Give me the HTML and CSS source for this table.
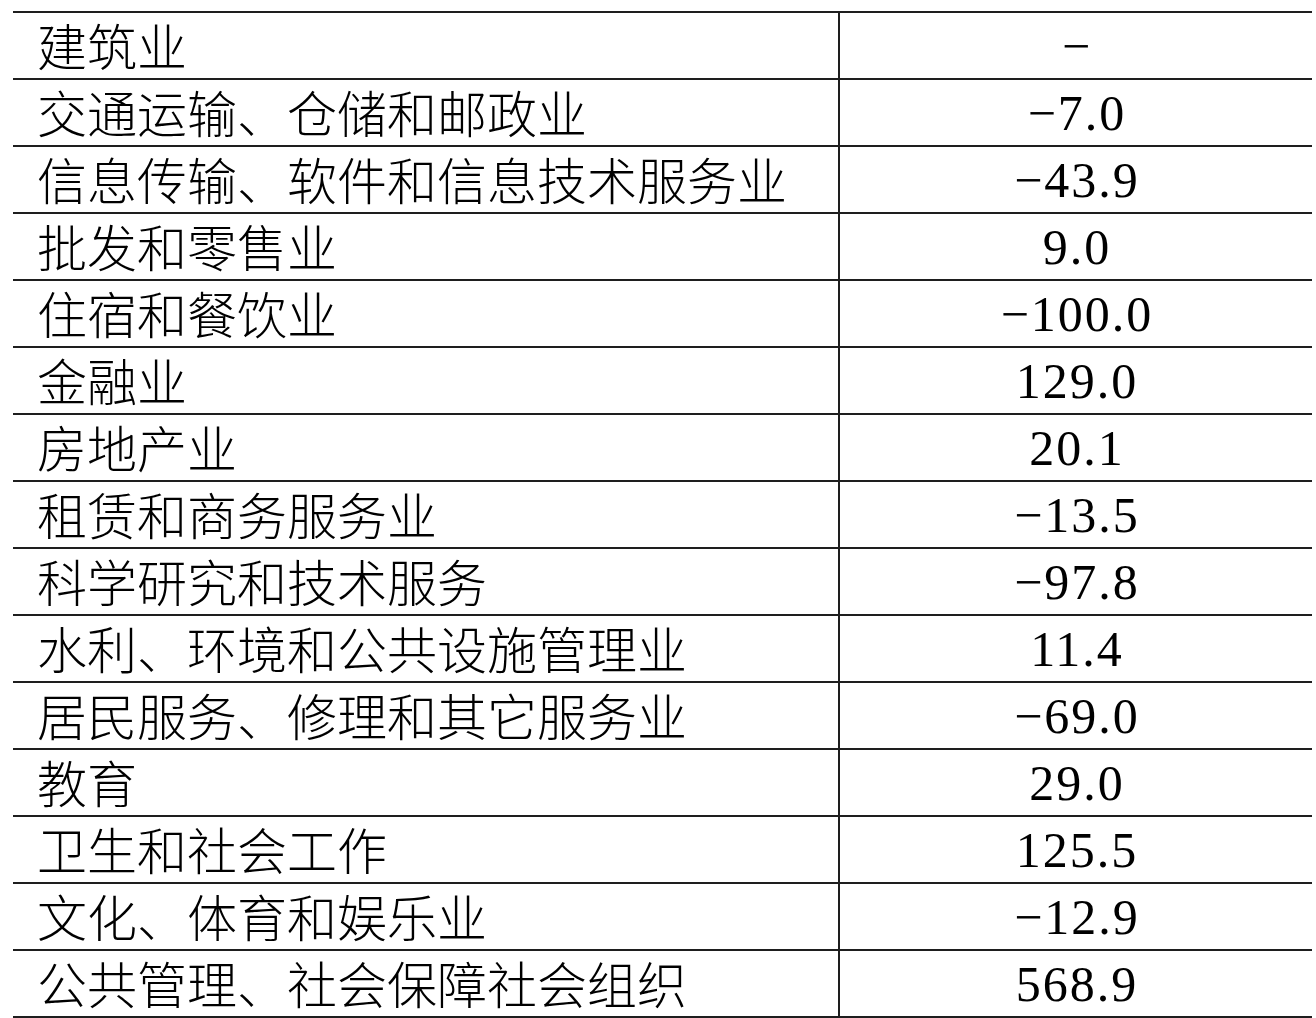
FILE: index.html
```html
<!DOCTYPE html>
<html lang="zh-CN">
<head>
<meta charset="utf-8">
<link rel="stylesheet" href="styles.css">
</head>
<body>
<div class="table">
  <div class="row"><div class="name">建筑业</div><div class="val">−</div></div>
  <div class="row"><div class="name">交通运输、仓储和邮政业</div><div class="val">−7.0</div></div>
  <div class="row"><div class="name">信息传输、软件和信息技术服务业</div><div class="val">−43.9</div></div>
  <div class="row"><div class="name">批发和零售业</div><div class="val">9.0</div></div>
  <div class="row"><div class="name">住宿和餐饮业</div><div class="val">−100.0</div></div>
  <div class="row"><div class="name">金融业</div><div class="val">129.0</div></div>
  <div class="row"><div class="name">房地产业</div><div class="val">20.1</div></div>
  <div class="row"><div class="name">租赁和商务服务业</div><div class="val">−13.5</div></div>
  <div class="row"><div class="name">科学研究和技术服务</div><div class="val">−97.8</div></div>
  <div class="row"><div class="name">水利、环境和公共设施管理业</div><div class="val">11.4</div></div>
  <div class="row"><div class="name">居民服务、修理和其它服务业</div><div class="val">−69.0</div></div>
  <div class="row"><div class="name">教育</div><div class="val">29.0</div></div>
  <div class="row"><div class="name">卫生和社会工作</div><div class="val">125.5</div></div>
  <div class="row"><div class="name">文化、体育和娱乐业</div><div class="val">−12.9</div></div>
  <div class="row"><div class="name">公共管理、社会保障社会组织</div><div class="val">568.9</div></div>
</div>
</body>
</html>
```

FILE: styles.css
```css
html, body {
  margin: 0;
  padding: 0;
  background: #ffffff;
}

.table {
  margin: 11px 0 0 13px;
  width: 1299px;
  border-top: 2px solid #1e1e1e;
  color: #000;
}

.row {
  display: grid;
  grid-template-columns: 827px 1fr;
  height: 67px;
  box-sizing: border-box;
  border-bottom: 2px solid #1e1e1e;
}

.name {
  border-right: 2px solid #1e1e1e;
  padding: 0 0 4px 24px;
  display: flex;
  align-items: center;
  font-family: "Noto Sans CJK SC", sans-serif;
  font-weight: 300;
  font-size: 50px;
  line-height: 1;
  white-space: nowrap;
}

.val {
  display: flex;
  align-items: center;
  justify-content: center;
  padding-left: 2px;
  font-family: "Liberation Serif", "Noto Sans CJK SC", serif;
  font-size: 50px;
  line-height: 1;
  letter-spacing: 2px;
}
```
